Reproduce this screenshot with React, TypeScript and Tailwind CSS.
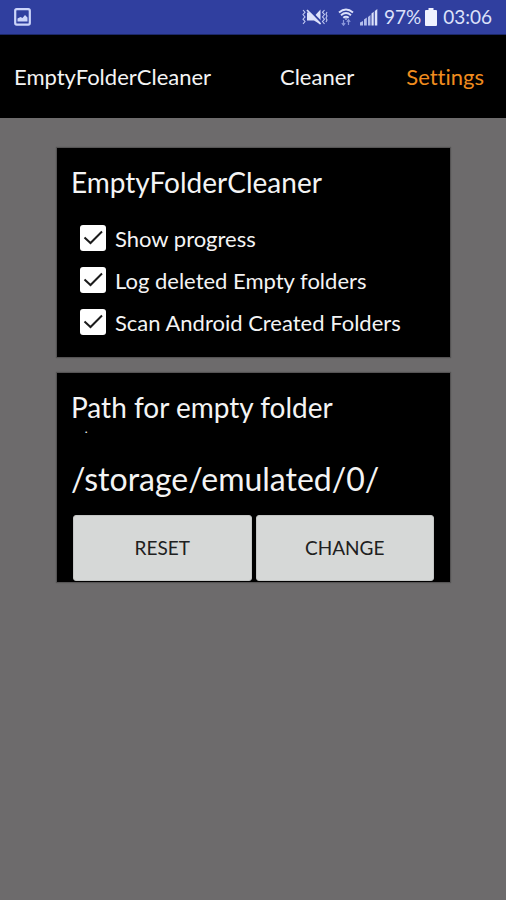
import type { ReactNode } from "react";

const options = ["Show progress", "Log deleted Empty folders", "Scan Android Created Folders"];

function StatusBar() {
  return (
    <div className="flex h-[35px] items-center justify-between border-b border-[#1c2868] bg-[#303f9f] px-3.5 text-[19px] text-[#dce1fa]">
      <svg width="17" height="18" viewBox="0 0 17 18" aria-hidden="true">
        <rect x="1.2" y="1.2" width="14.6" height="15.4" rx="1.5" fill="none" stroke="#cdd5fa" strokeWidth="2.2" />
        <path d="M3.5 13.5v-3l3-1.500 2 1 2.500-3 2.500 2.500v4z" fill="#cdd5fa" />
      </svg>
      <div className="flex items-center">
        <svg width="26" height="18" viewBox="0 0 26 18" aria-hidden="true">
          <path d="M5 4.500h3.500l4 3.500L18.500 1.500v15L12 12.500H5z" fill="#dce1fa" />
          <path d="M6.500 1l14 14.500" stroke="#303f9f" strokeWidth="1.800" />
          <path d="M5 2l13.500 14" stroke="#dce1fa" strokeWidth="1.800" />
          <path d="M1 2l2 2.300-2 2.300 2 2.300-2 2.300 2 2.300-2 2.300M22.500 2l-2 2.300 2 2.300-2 2.300 2 2.300-2 2.300 2 2.300M25 4l-1 2 1 2-1 2 1 2-1 2" fill="none" stroke="#c2caf2" strokeWidth="1.100" />
        </svg>
        <svg className="ml-2.5" width="16" height="18" viewBox="0 0 16 18" aria-hidden="true">
          <path d="M1 4.500Q8-1.500 15 4.500M3 7.200Q8 3 13 7.200M5.300 9.800Q8 7.500 10.700 9.800" fill="none" stroke="#dce1fa" strokeWidth="1.900" />
          <path d="M6.500 10.500h3L8 12z" fill="#dce1fa" />
          <path d="M5.500 12v5M3.800 15.200l1.700 2 1.700-2M10.500 17v-5M8.800 13.800l1.700-2 1.700 2" fill="none" stroke="#8c99dc" strokeWidth="1.200" />
        </svg>
        <svg className="ml-1.5" width="18" height="18" viewBox="0 0 18 18" aria-hidden="true">
          <path d="M0 17.500v-3l3-1.500v4.500zM4 17.500v-6l2.800-2v8zM8 17.500V9l2.500-2v10.500z" fill="#b4beec" />
          <path d="M11.500 17.500v-12l2.200-1.700v13.700zM14.800 17.500V3L17.300 1v16.500z" fill="#dce1fa" />
        </svg>
        <span className="ml-1.5">97%</span>
        <svg className="ml-1" width="12" height="18" viewBox="0 0 12 18" aria-hidden="true">
          <path d="M3.500 0h5v2H11q1 0 1 1v14q0 1-1 1H1q-1 0-1-1V3q0-1 1-1h2.500z" fill="#f0f2ff" />
        </svg>
        <span className="ml-1.5">03:06</span>
      </div>
    </div>
  );
}

function Card({ title, children }: { title: string; children: ReactNode }) {
  return (
    <section className="bg-black px-3.5 pt-[18px] shadow-[0_0_1px_1px_#555354]">
      <h2 className="text-[28px] leading-8">{title}</h2>
      {children}
    </section>
  );
}

function Option({ label }: { label: string }) {
  return (
    <label className="flex h-[42px] items-center gap-[9px] pl-[9px] text-[22px]">
      <span className="grid size-[26px] shrink-0">
        <input
          type="checkbox"
          defaultChecked
          className="peer col-start-1 row-start-1 size-[26px] appearance-none rounded-[3px] bg-white"
        />
        <svg
          className="pointer-events-none invisible col-start-1 row-start-1 peer-checked:visible"
          viewBox="0 0 26 26"
          aria-hidden="true"
        >
          <path d="M4.500 12.500l6 5.500L22 6.500" fill="none" stroke="#1b1b1b" strokeWidth="2" />
        </svg>
      </span>
      {label}
    </label>
  );
}

function ActionButton({ children }: { children: ReactNode }) {
  return (
    <button
      type="button"
      className="h-[66px] flex-1 rounded-[3px] border border-[#c4c6c5] bg-[#d6d8d7] text-[19px] text-[#202020]"
    >
      {children}
    </button>
  );
}

export default function App() {
  return (
    <div className="min-h-screen bg-[#6d6b6c] font-['Lato','Noto_Sans',sans-serif] text-[#f4f4f4] [font-variant-ligatures:none]">
      <StatusBar />
      <header className="flex h-[83px] items-center bg-black pr-5 pl-3.5 text-[22px]">
        <h1 className="flex-1">EmptyFolderCleaner</h1>
        <nav className="flex gap-[50px]">
          <a href="#cleaner">Cleaner</a>
          <a href="#settings" aria-current="page" className="px-0.5 text-[#f08c1e]">
            Settings
          </a>
        </nav>
      </header>
      <main className="flex flex-col gap-4 pt-[30px] pr-14 pl-[57px]">
        <Card title="EmptyFolderCleaner">
          <div className="pt-[19px] pb-3.5">
            {options.map((label) => (
              <Option key={label} label={label} />
            ))}
          </div>
        </Card>
        <Card title="Path for empty folder">
          <p className="pl-3.5 text-[10px] leading-3 font-black">.</p>
          <p className="pt-[26px] text-[32px] leading-9">/storage/emulated/0/</p>
          <div className="flex gap-1 px-0.5 pt-[18px] pb-px">
            <ActionButton>RESET</ActionButton>
            <ActionButton>CHANGE</ActionButton>
          </div>
        </Card>
      </main>
    </div>
  );
}
